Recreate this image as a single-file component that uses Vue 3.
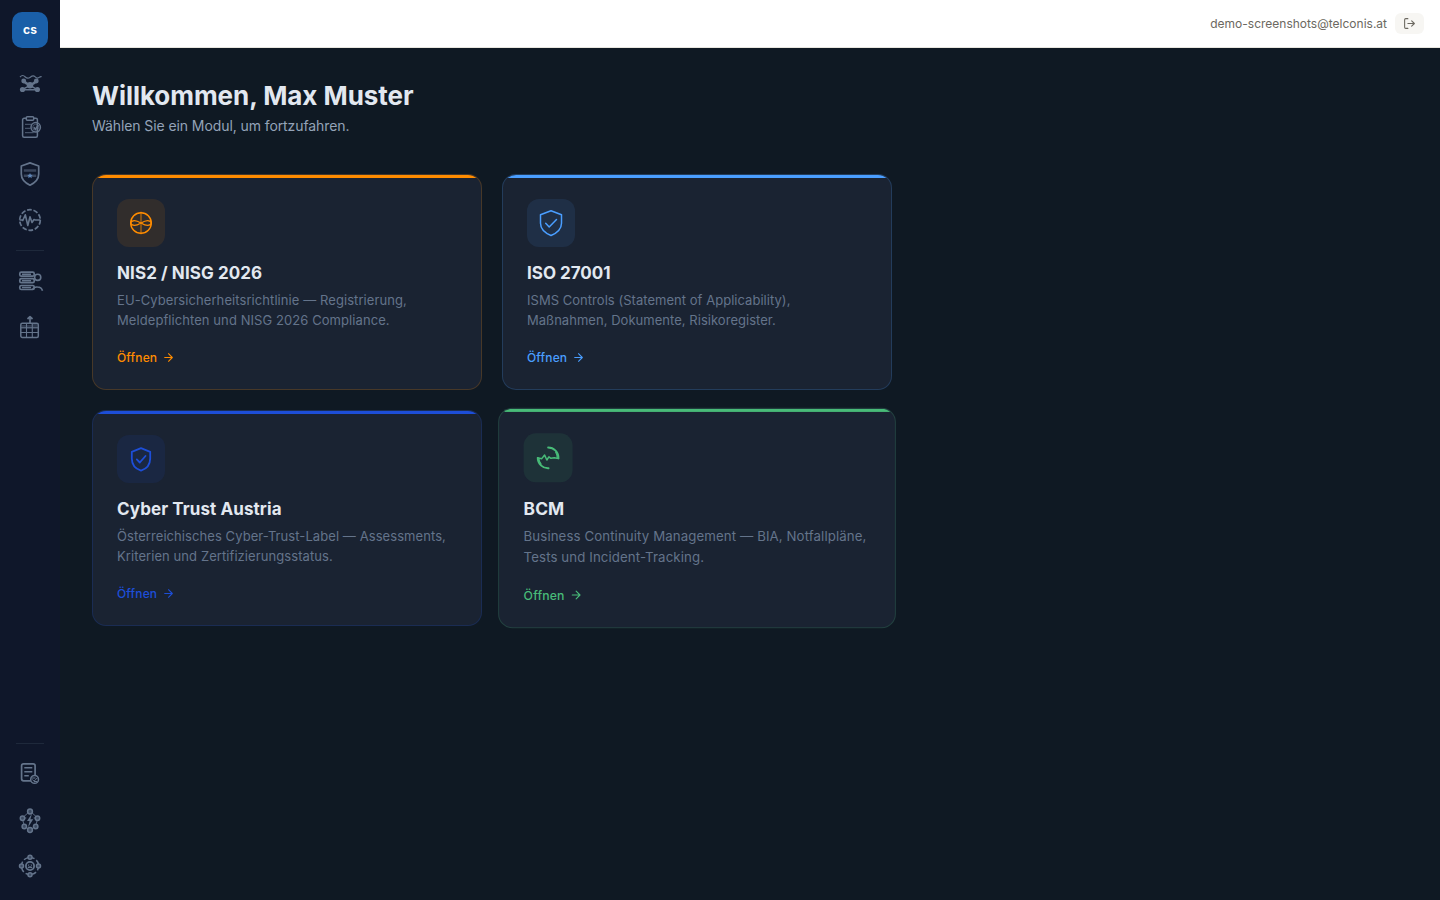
<template>
  <div class="shell">
    <aside class="sidebar">
      <div class="logo">cs</div>
      <nav class="nav">
        <a class="nav-item">
          <svg viewBox="0 0 24 24">
            <path d="M2 7.200C4 4.700 5.500 5.200 7.300 7s3.200 1.600 5 .2 3-2.200 4.600-.6 3 1.900 4.300.8 1.600-1 2.400-.8" stroke-width="1.200" />
            <path d="M5.700 10.700 12 15.300l6.300-4.600M4.300 19.700l7.700-4.400 7.300 4.400zM9 14.500l-3.500-2.500M15 14.500l3.500-2.500" />
            <g class="solid">
              <circle cx="5.700" cy="11" r="2.400" /><circle cx="18.300" cy="11" r="2.400" />
              <circle cx="12" cy="15.200" r="3.200" />
              <circle cx="4.500" cy="19.500" r="2.600" /><circle cx="19.400" cy="19.500" r="2.600" />
            </g>
          </svg>
        </a>
        <a class="nav-item">
          <svg viewBox="0 0 24 24">
            <rect x="4.600" y="2.300" width="14.800" height="19" rx="1.500" />
            <rect x="8.300" y=".8" width="7.400" height="3.400" rx="1" class="cut" />
            <path d="M7 8.300h7M7 12.300h5.500M7 16.700h8.500" stroke-width="1" opacity=".8" />
            <circle cx="17.700" cy="11.300" r="4.700" />
            <circle cx="17.700" cy="11.300" r="3" stroke-width=".6" />
            <path d="m15.800 11.300 1.600 2 2.900-4.500" />
          </svg>
        </a>
        <a class="nav-item">
          <svg viewBox="0 0 24 24">
            <path d="M12 .9 20.700 4v8c0 5.300-3.500 8.700-8.700 11.200C6.800 20.700 3.300 17.300 3.300 12V4z" stroke-width="1.700" />
            <path d="M5.800 8.500h12.400M5.800 13.700h12.400" stroke-width="2.600" opacity=".5" />
            <path class="star" d="m12 10.900.8 1.900 2 .1-1.500 1.300.5 2-1.800-1.100-1.800 1.100.5-2-1.500-1.300 2-.1z" />
          </svg>
        </a>
        <a class="nav-item">
          <svg viewBox="0 0 24 24">
            <circle cx="12" cy="12" r="10.300" stroke-width="1.700" stroke-dasharray="4.700 1.770" />
            <path d="M1.500 12H4l.8.500 2.500-5.700 2.500 10.700L12 8.800l2 5.700 2-3 1.300.5h5.200" stroke-width="1.600" />
          </svg>
        </a>
        <div class="divider" />
        <a class="nav-item">
          <svg viewBox="0 0 24 24">
            <rect x="1.800" y="3.200" width="14.400" height="4" rx="1.500" stroke-width="1.700" />
            <rect x="1.800" y="9.700" width="14.400" height="4" rx="1.500" stroke-width="1.700" />
            <rect x="1.800" y="16.500" width="14.400" height="4" rx="1.500" stroke-width="1.700" />
            <path d="M4 5.200h9M4 11.700h9M4 18.500h9" />
            <circle cx="19.700" cy="8.300" r="3.100" stroke-width="1.600" />
            <path d="M14.500 20.500c1-2 3-2.700 5-2.500 2.700 0 4.300 1.300 5 3.800" stroke-width="1.600" />
          </svg>
        </a>
        <a class="nav-item">
          <svg viewBox="0 0 24 24">
            <path d="M3.500 10h10v3.500h-10zM13.500 8.500h6v5h-6z" class="solid" opacity=".35" />
            <rect x="2.800" y="8.300" width="17.500" height="14.200" rx="1.500" />
            <path d="M8.500 9v13M14.300 9v13M3 12.700h17M3 17.500h17" stroke-width="1.100" />
            <path d="M12 8V1.800M9.500 4 12 1.700 14.500 4" stroke-width="1.700" />
          </svg>
        </a>
      </nav>
      <nav class="nav nav-bottom">
        <div class="divider" />
        <a class="nav-item">
          <svg viewBox="0 0 24 24">
            <rect x="3.600" y="1.800" width="13.500" height="17" rx="2" stroke-width="1.700" />
            <path d="M6.300 5.800h8M6.300 9.800h8M6.300 13.800h4.500" />
            <circle cx="16.600" cy="17.400" r="3.900" class="cut" />
            <path d="m14.300 17.400 1.700 1.800 3.500-3.500M13.500 16h4M16 19.500h3" stroke-width="1" />
          </svg>
        </a>
        <a class="nav-item">
          <svg viewBox="0 0 24 24">
            <path d="M12 3 4.300 10l2 8.300L12 22l5.700-3.700 2-8.300zM4.300 10h4M19.700 10h-4" stroke-width=".9" />
            <g class="node">
              <circle cx="12" cy="3.500" r="2.400" /><circle cx="4.500" cy="10.200" r="2.200" />
              <circle cx="19.500" cy="10.200" r="2.200" /><circle cx="6.300" cy="18.500" r="2.200" />
              <circle cx="17.700" cy="18.500" r="2.200" /><circle cx="12" cy="22" r="2.400" />
            </g>
            <path class="solid" d="m14 5.500-5 7.500h2.600L10 19.500l5.200-8.300h-2.800z" />
          </svg>
        </a>
        <a class="nav-item">
          <svg viewBox="0 0 24 24">
            <circle cx="12" cy="12" r="8.600" stroke-dasharray="4.500 2.250" />
            <g class="node">
              <circle cx="12" cy="3.300" r="2" /><circle cx="12" cy="20.700" r="2" />
              <circle cx="3.500" cy="12" r="2" /><circle cx="20.500" cy="12" r="2" />
            </g>
            <circle cx="12" cy="12" r="4.100" stroke-width="1.800" />
            <path d="m10.300 10.800.7.600M13.700 10.800l-.7.600M10.200 14c.8-1.300 2.800-1.300 3.600 0" />
          </svg>
        </a>
      </nav>
    </aside>

    <div class="content">
      <header class="topbar">
        <span class="user-mail">demo-screenshots@telconis.at</span>
        <button class="logout" title="Abmelden">
          <svg viewBox="0 0 24 24">
            <path d="M9 21H5a2 2 0 0 1-2-2V5a2 2 0 0 1 2-2h4M16 17l5-5-5-5M21 12H9" />
          </svg>
        </button>
      </header>

      <main class="main">
        <h1>Willkommen, Max Muster</h1>
        <p class="subtitle">Wählen Sie ein Modul, um fortzufahren.</p>

        <div class="grid">
          <a
            v-for="m in modules"
            :key="m.id"
            class="card"
            :class="[`card--${m.id}`, { 'card--active': m.id === active }]"
          >
            <div class="card-icon">
              <svg v-if="m.id === 'nis'" viewBox="0 0 28 28">
                <path d="M14 3.500v21" stroke-width="2" opacity=".4" />
                <circle cx="14" cy="14" r="10.300" />
                <path d="M3.700 13.600C5.500 10.700 9.500 11.300 14 14s8.500 3.300 10.300.4M3.700 14.400C5.500 17.300 9.500 16.700 14 14s8.500-3.300 10.300-.4" stroke-width="1.200" />
              </svg>
              <svg v-else-if="m.id === 'iso'" viewBox="0 0 28 28">
                <path d="m14 1.800 10.500 4v8.400c0 5.500-4.500 9.700-10.500 12.300C8 23.900 3.500 19.700 3.500 14.200V5.800z" />
                <path d="m8.700 14.300 3.500 3.700 7.300-7.500" />
              </svg>
              <svg v-else-if="m.id === 'cta'" viewBox="0 0 28 28" class="bold">
                <path d="m14 3.100 9.200 3.700v6.700c0 6-3.400 10.200-9.200 12.200-5.800-2-9.200-6.200-9.200-12.200V6.800z" />
                <path d="m9.800 14.400 3 3.100 5.700-6.500" />
              </svg>
              <svg v-else viewBox="0 0 28 28" class="bold">
                <path d="M14 3.900A10.200 10.200 0 0 1 24.200 14.500M14.500 24.200A10.200 10.200 0 0 1 3.800 14" />
                <path d="M3.800 14l4 .8 2.800-3.500 2.200 4.800 2-3.100 2 1.500 3.200-.6 4.200.7" stroke-width="1.500" />
                <path d="M21.500 8.500c1.200 2 1.500 3.800 1.500 5.700M5 14.500c0 2.200.8 4.200 2.200 5.700" stroke-width="1.200" />
              </svg>
            </div>
            <h2>{{ m.title }}</h2>
            <p class="desc">{{ m.desc }}</p>
            <span class="open">
              Öffnen
              <svg viewBox="0 0 24 24"><path d="M5 12h14M12 5l7 7-7 7" /></svg>
            </span>
          </a>
        </div>
      </main>
    </div>
  </div>
</template>

<script setup>
import { ref } from 'vue'

const active = ref('bcm')

const modules = [
  { id: 'nis', title: 'NIS2 / NISG 2026', desc: 'EU-Cybersicherheitsrichtlinie — Registrierung, Meldepflichten und NISG 2026 Compliance.' },
  { id: 'iso', title: 'ISO 27001', desc: 'ISMS Controls (Statement of Applicability), Maßnahmen, Dokumente, Risikoregister.' },
  { id: 'cta', title: 'Cyber Trust Austria', desc: 'Österreichisches Cyber-Trust-Label — Assessments, Kriterien und Zertifizierungsstatus.' },
  { id: 'bcm', title: 'BCM', desc: 'Business Continuity Management — BIA, Notfallpläne, Tests und Incident-Tracking.' },
]
</script>

<style>
body {
  background: #0f1923;
}
</style>

<style scoped>
.shell {
  display: flex;
  height: 100vh;
  font-family: Inter, sans-serif;
}

svg {
  display: block;
  fill: none;
  stroke: currentColor;
  stroke-linecap: round;
  stroke-linejoin: round;
}

.sidebar {
  width: 60px;
  flex-shrink: 0;
  box-sizing: border-box;
  padding: 12px 0;
  display: flex;
  flex-direction: column;
  align-items: center;
  background: #0f172a;
}

.logo {
  width: 36px;
  height: 36px;
  margin-bottom: 12px;
  border-radius: 10px;
  background: #1a5fa8;
  color: #fff;
  font-size: 12px;
  font-weight: 700;
  line-height: 36px;
  text-align: center;
}

.nav {
  display: flex;
  flex-direction: column;
  align-items: center;
  gap: 2px;
}

.nav-bottom { margin-top: auto; }

.nav-item {
  width: 44px;
  height: 44px;
  display: flex;
  align-items: center;
  justify-content: center;
  color: #64748b;
}

.nav-item svg {
  width: 24px;
  height: 24px;
  stroke-width: 1.500;
  stroke-linecap: butt;
  overflow: visible;
}

.solid { fill: currentColor; stroke: none; }
.cut   { fill: #0f172a; }
.node  { fill: #3d4b62; }
.star  { fill: #5f86b8; stroke: none; }

.divider {
  width: 28px;
  height: 1px;
  margin: 6px 0;
  background: #1e293b;
}

.content {
  flex: 1;
  display: flex;
  flex-direction: column;
}

.topbar {
  height: 48px;
  box-sizing: border-box;
  padding: 0 16px;
  display: flex;
  align-items: center;
  justify-content: flex-end;
  gap: 8px;
  background: #fff;
  border-bottom: 1px solid #e8e6df;
}

.user-mail {
  font-size: 12px;
  color: #6b6860;
}

.logout {
  padding: 4px 8px;
  border: 0;
  border-radius: 6px;
  background: #f7f6f3;
  color: #6b6860;
}

.logout svg {
  width: 13px;
  height: 13px;
  stroke-width: 2;
}

.main {
  flex: 1;
  padding: 32px;
  background: #0f1923;
}

h1 {
  margin: 0 0 6px;
  font-size: 26px;
  font-weight: 700;
  line-height: 31px;
  letter-spacing: -0.05px;
  color: #e2e8f0;
}

.subtitle {
  margin: 0 0 40px;
  font-size: 14px;
  line-height: 17px;
  letter-spacing: -0.09px;
  color: #94a3b8;
}

.grid {
  display: grid;
  grid-template-columns: repeat(2, 1fr);
  gap: 20px;
  width: 800px;
}

.card {
  position: relative;
  box-sizing: border-box;
  height: 216px;
  padding: 24px;
  overflow: hidden;
  border: 1px solid color-mix(in srgb, var(--accent) 20%, transparent);
  border-radius: 14px;
  background: #1a2332;
}

.card::before {
  content: '';
  position: absolute;
  top: 0;
  left: 0;
  right: 0;
  height: 3px;
  background: var(--accent);
}

.card--nis { --accent: #ff8c00; }
.card--iso { --accent: #4a9eff; }
.card--cta { --accent: #1d4ed8; }
.card--bcm { --accent: #48bb78; }

.card--active { transform: scale(1.02); }

.card-icon {
  width: 48px;
  height: 48px;
  margin-bottom: 16px;
  display: flex;
  align-items: center;
  justify-content: center;
  border-radius: 12px;
  background: color-mix(in srgb, var(--accent) 10%, transparent);
  color: var(--accent);
}

.card-icon svg {
  width: 28px;
  height: 28px;
  stroke-width: 1.500;
}

.card-icon .bold { stroke-width: 1.800; }

h2 {
  margin: 0 0 6px;
  font-size: 17px;
  font-weight: 700;
  line-height: 21px;
  letter-spacing: 0.090px;
  color: #e2e8f0;
}

.desc {
  margin: 0 0 20px;
  font-size: 13px;
  line-height: 20.150px;
  letter-spacing: 0.075px;
  color: #64748b;
}

.card--iso h2 { letter-spacing: 0; }
.card--iso .desc { letter-spacing: 0.035px; }
.card--bcm .desc { letter-spacing: 0.090px; }

.open {
  display: flex;
  align-items: center;
  gap: 5px;
  font-size: 12px;
  font-weight: 500;
  line-height: 15px;
  letter-spacing: 0.150px;
  color: var(--accent);
}

.open svg {
  width: 13px;
  height: 13px;
  stroke-width: 2;
}
</style>
